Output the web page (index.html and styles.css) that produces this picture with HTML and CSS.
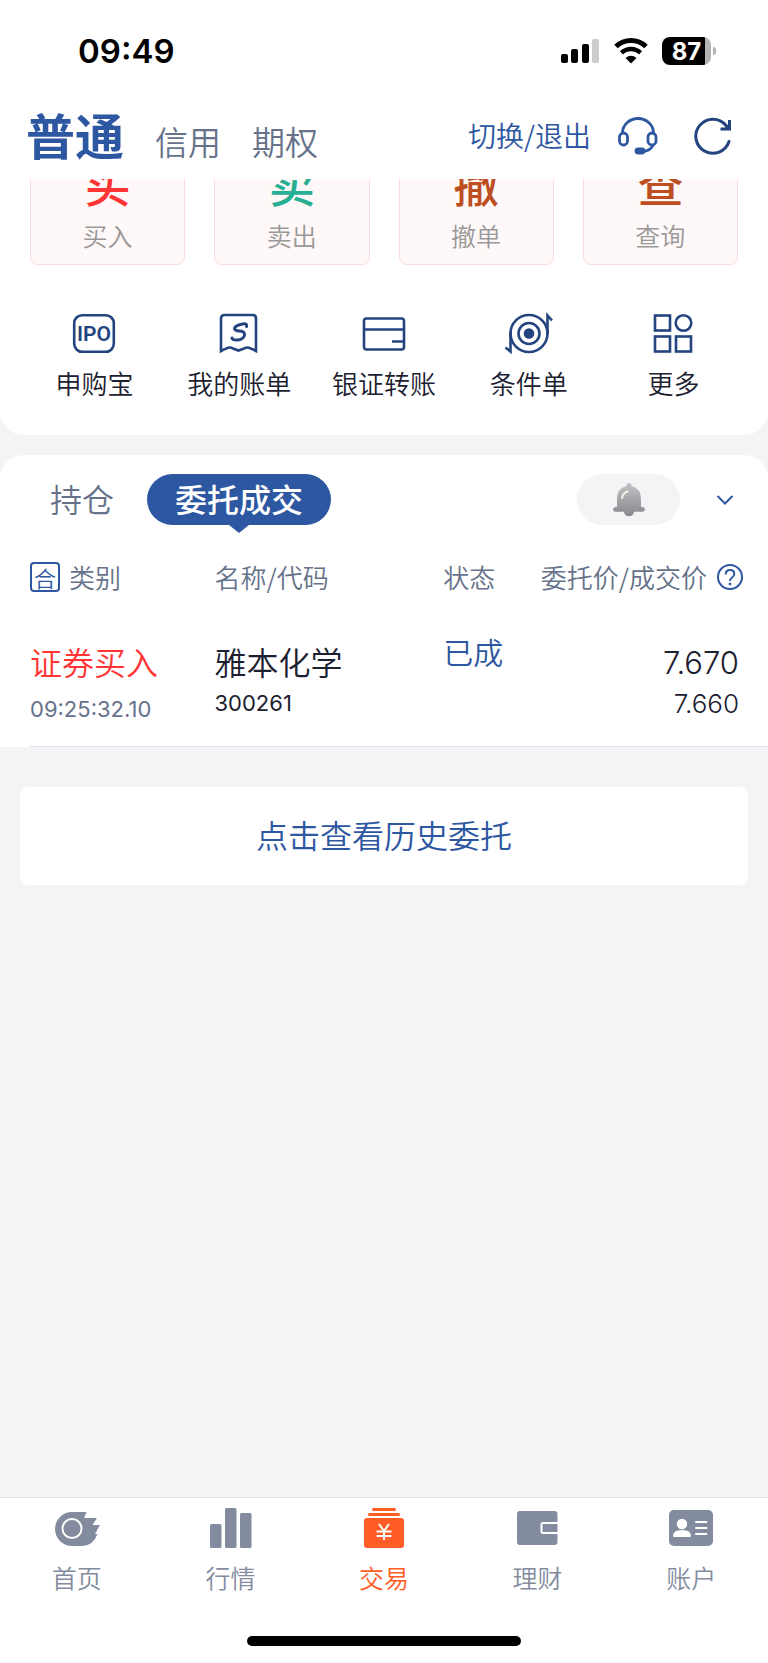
FILE: index.html
```html
<!DOCTYPE html>
<html lang="zh-CN">
<head>
    <meta charset="UTF-8">
    <meta name="viewport" content="width=device-width, initial-scale=1.0">
    <title>交易</title>
    <link rel="stylesheet" href="styles.css">
</head>
<body>

    <!-- 状态栏 -->
    <div class="status">
        <span class="clock">09:49</span>
        <div class="signals">
            <svg width="40" height="28" viewBox="0 0 40 28">
                <rect x="1" y="17" width="7" height="9" rx="2"/>
                <rect x="11" y="12" width="7" height="14" rx="2"/>
                <rect x="22" y="7" width="7" height="19" rx="2"/>
                <rect x="32" y="2" width="7" height="24" rx="2" fill="#ccc"/>
            </svg>
            <svg width="34" height="28" viewBox="0 0 34 28">
                <path d="M2 9.500a21.500 21.500 0 0 1 30 0" fill="none" stroke="#000" stroke-width="5"/>
                <path d="M7.500 15.800a13.500 13.500 0 0 1 19 0" fill="none" stroke="#000" stroke-width="4.500"/>
                <path d="M11.500 21q5.500-4.500 11 0L17 26.500z"/>
            </svg>
            <span class="battery"><span class="level">87</span></span>
        </div>
    </div>

    <header class="top">
        <nav class="accounts">
            <a class="current" href="#normal">普通</a>
            <a href="#credit">信用</a>
            <a href="#option">期权</a>
        </nav>
        <div class="tools">
            <button class="switch">切换/退出</button>
            <button aria-label="客服">
                <svg width="40" height="40" viewBox="0 0 40 40" fill="none" stroke="#2e57a2" stroke-width="2.800">
                    <path d="M4.500 18v-1a15.500 14.500 0 0 1 31 0v1"/>
                    <rect x="1.500" y="17" width="8" height="12" rx="4"/>
                    <rect x="30" y="17" width="8" height="12" rx="4"/>
                    <path d="M35 29q-2 5.500-10 6.500"/>
                    <rect x="18" y="33" width="8" height="4" rx="2" fill="#2e57a2"/>
                </svg>
            </button>
            <button aria-label="刷新">
                <svg width="40" height="40" viewBox="0 0 40 40" fill="none" stroke="#23447f" stroke-width="3" stroke-linecap="round">
                    <path d="M35 25.500A17 17 0 1 1 32 9.500"/>
                    <path d="M26.500 13h9V4" stroke-linecap="butt"/>
                    <path d="M30 12.500l5-5v5z" fill="#23447f" stroke="none"/>
                </svg>
            </button>
        </div>
    </header>

    <main>
        <section class="panel first">
            <!-- 滚动后上半部分被顶栏遮住 -->
            <div class="trade">
                <a class="buy" href="#buy"><b>买</b>买入</a>
                <a class="sell" href="#sell"><b>卖</b>卖出</a>
                <a href="#cancel"><b>撤</b>撤单</a>
                <a href="#query"><b>查</b>查询</a>
            </div>
            <nav class="quick">
                <a href="#ipo">
                    <svg width="48" height="42" viewBox="0 0 48 42">
                        <rect x="4.200" y="3.200" width="39.600" height="36.600" rx="8"/>
                        <text x="24" y="29" class="ipo">IPO</text>
                    </svg>
                    申购宝
                </a>
                <a href="#bill">
                    <svg width="48" height="42" viewBox="0 0 48 42">
                        <path d="M6 39V6.500q0-3.500 3.500-3.500h28q3.500 0 3.500 3.500V39q-3.500-2-5.500-2.500-3-2-6.500 0L23.500 38.500l-5.500-2q-3.500-2-6.500 0-2 .5-5.500 2.500z"/>
                        <path d="M31.500 14.500q1-3.500-4-2.500-7.500 1.500-8 4.500-.3 2 5 2.500 6 .5 5 4.500-1.500 4-7 4.500-5 .3-5.500-2" stroke-width="3" stroke-linecap="round"/>
                    </svg>
                    我的账单
                </a>
                <a href="#transfer">
                    <svg width="48" height="42" viewBox="0 0 48 42">
                        <rect x="4" y="6.500" width="40" height="31" rx="2.500"/>
                        <path d="M4 17.500h40M32 29.500h12"/>
                    </svg>
                    银证转账
                </a>
                <a href="#condition">
                    <svg width="48" height="42" viewBox="0 0 48 42">
                        <circle cx="24" cy="21.500" r="18.500"/>
                        <circle cx="24" cy="21.500" r="10.500"/>
                        <circle cx="24" cy="21.500" r="4" fill="#23447f"/>
                        <path d="M42.500 22V3.500l4.500 5M5.500 20v19.500l-5-4"/>
                    </svg>
                    条件单
                </a>
                <a href="#more">
                    <svg width="48" height="42" viewBox="0 0 48 42">
                        <rect x="5" y="3.500" width="15" height="15"/>
                        <circle cx="33.500" cy="11" r="7.800"/>
                        <rect x="5" y="24.500" width="15" height="15"/>
                        <rect x="26" y="24.500" width="15" height="15"/>
                    </svg>
                    更多
                </a>
            </nav>
        </section>

        <section class="panel second">
            <div class="tabs">
                <button class="tab">持仓</button>
                <button class="tab active">委托成交</button>
                <button class="bell" aria-label="提醒">
                    <svg width="32" height="36" viewBox="0 0 32 36">
                        <defs>
                            <linearGradient id="metal" x1="0" y1="0" x2="0" y2="1">
                                <stop offset="0" stop-color="#c0c2c5"/>
                                <stop offset="1" stop-color="#88898c"/>
                            </linearGradient>
                        </defs>
                        <path fill="url(#metal)" d="M16 1a2.500 2.500 0 0 1 2.500 3Q28 6.500 28 17v8h1.500a2.300 2.300 0 0 1 0 4.800H21a5 4.500 0 0 1-10 0H2.500a2.300 2.300 0 0 1 0-4.800H4v-8Q4 6.500 13.500 4A2.500 2.500 0 0 1 16 1z"/>
                        <path d="M9 16q1-5 5.500-6.500" fill="none" stroke="#f6f1e4" stroke-width="2" stroke-linecap="round"/>
                    </svg>
                </button>
                <button class="fold" aria-label="展开">
                    <svg width="18" height="12" viewBox="0 0 18 12" fill="none" stroke="#2e57a2" stroke-width="2">
                        <path d="M1.500 2L9 9.500 16.500 2"/>
                    </svg>
                </button>
            </div>

            <table>
                <colgroup>
                    <col class="c-type"><col class="c-name"><col class="c-state"><col class="c-price">
                </colgroup>
                <thead>
                    <tr>
                        <th><div class="head"><button class="merge">合</button>类别</div></th>
                        <th>名称/代码</th>
                        <th>状态</th>
                        <th>
                            <div class="head end">委托价/成交价
                                <button aria-label="说明">
                                    <svg width="28" height="28" viewBox="0 0 28 28" fill="none" stroke="#2e57a2" stroke-width="2">
                                        <circle cx="14" cy="14" r="12"/>
                                        <path d="M9.700 11.500q0-4.500 4.300-4.500t4.300 4q0 2-2.300 3.500-2 1.300-2 3.500"/>
                                        <circle cx="14" cy="21" r="1" fill="#2e57a2" stroke-width="1"/>
                                    </svg>
                                </button>
                            </div>
                        </th>
                    </tr>
                </thead>
                <tbody>
                    <tr>
                        <td><div class="big red">证券买入</div><div class="time">09:25:32.10</div></td>
                        <td><div class="big">雅本化学</div><div class="code">300261</div></td>
                        <td class="state">已成</td>
                        <td class="price"><div class="order">7.670</div><div class="deal">7.660</div></td>
                    </tr>
                </tbody>
            </table>
        </section>

        <a class="history" href="#history">点击查看历史委托</a>
    </main>

    <footer>
        <nav class="menu">
            <a href="#home">
                <svg width="48" height="44" viewBox="0 0 48 44">
                    <path d="M19 6h14.500L31 12h13l-4.500 7H47l-5 9h2.500Q40 40 29 40H19A17 17 0 0 1 19 6z"/>
                    <circle cx="19" cy="22.500" r="9.500" fill="none" stroke="#fff" stroke-width="2"/>
                </svg>
                首页
            </a>
            <a href="#quotes">
                <svg width="48" height="44" viewBox="0 0 48 44">
                    <rect x="4" y="18" width="11.500" height="24" rx="1.500"/>
                    <rect x="19" y="2" width="11.500" height="40" rx="1.500"/>
                    <rect x="34" y="7" width="11.500" height="35" rx="1.500"/>
                </svg>
                行情
            </a>
            <a class="on" href="#trade">
                <svg width="48" height="44" viewBox="0 0 48 44">
                    <rect x="12" y="2" width="24" height="3" rx="1.500"/>
                    <rect x="8" y="7" width="32" height="3" rx="1.500"/>
                    <rect x="4" y="12" width="40" height="30" rx="3"/>
                    <path d="M19 18l5 7 5-7M16.500 25.500h15M16.500 30h15M24 25v9" fill="none" stroke="#fff" stroke-width="2"/>
                </svg>
                交易
            </a>
            <a href="#wealth">
                <svg width="48" height="44" viewBox="0 0 48 44">
                    <rect x="3" y="5" width="40.500" height="34" rx="3"/>
                    <path d="M44 17H29q-1.500 0-1.500 1.500v7q0 1.500 1.500 1.500h15" fill="none" stroke="#fff" stroke-width="2"/>
                </svg>
                理财
            </a>
            <a href="#account">
                <svg width="48" height="44" viewBox="0 0 48 44">
                    <rect x="2" y="4" width="44" height="36" rx="5"/>
                    <g fill="#fff">
                        <circle cx="15" cy="18" r="5.200"/>
                        <path d="M6 30q0-6 9-6t9 6q0 1-1 1h-16q-1 0-1-1z"/>
                        <rect x="28" y="15" width="12.500" height="2" rx="1"/>
                        <rect x="28" y="21" width="12.500" height="2" rx="1"/>
                        <rect x="28" y="27" width="12.500" height="2" rx="1"/>
                    </g>
                </svg>
                账户
            </a>
        </nav>
        <div class="indicator"></div>
    </footer>

</body>
</html>
```

FILE: styles.css
```css
*{
    margin: 0;
    padding: 0;
    box-sizing: border-box;
}

body{
    display: flex;
    flex-direction: column;
    min-height: 100vh;
    background-color: #f3f4f6;
    color: #1c2030;
    font-family: "Noto Sans CJK SC", sans-serif;
    font-size: 26px;
    font-weight: 350;
    line-height: 36px;
}

a{
    color: inherit;
    text-decoration: none;
}

button{
    border: 0;
    background: none;
    color: inherit;
    font: inherit;
}

svg{ display: block; }

/* 状态栏 */
.status{
    display: flex;
    justify-content: space-between;
    align-items: center;
    height: 102px;
    padding: 0 57px 0 78px;
    background-color: #fff;
    color: #000;
    font-family: Inter, sans-serif;
}
.clock{
    font-size: 33px;
    font-weight: 600;
}
.signals{
    display: flex;
    align-items: center;
    gap: 14px;
}
.battery{
    position: relative;
    width: 49px; height: 28px;
    border-radius: 8px;
    background: linear-gradient(90deg, #000 43px, #b4b4b4 43px);
    color: #fff;
    font-size: 24px;
    font-weight: 700;
    line-height: 29px;
    text-align: center;
}
/* 电池正极 */
.battery::after{
    content: "";
    position: absolute;
    right: -5px; top: 10px;
    width: 3px; height: 8px;
    border-radius: 0 4px 4px 0;
    background-color: #b4b4b4;
}

/* 顶栏 */
.top{
    display: flex;
    justify-content: space-between;
    height: 77px;
    padding: 0 34px 0 26px;
    background-color: #fff;
}
.accounts{
    display: flex;
    align-items: baseline;
    gap: 31px;
    color: #66728a;
    font-size: 33px;
    line-height: 63px;
}
.accounts .current{
    color: #2e57a2;
    font-size: 49px;
    font-weight: 700;
}
.tools{
    display: flex;
    align-items: center;
    gap: 36px;
    height: 68px;
    color: #2e57a2;
    font-size: 28px;
}
.switch{
    margin-right: -9px;
    padding-bottom: 2px;
}

.panel{ background-color: #fff; }
.first{
    padding-bottom: 34px;
    border-radius: 0 0 24px 24px;
}
.second{
    margin-top: 20px;
    padding-top: 19px;
    border-radius: 24px 24px 0 0;
}

/* 买卖撤查 */
.trade{
    display: flex;
    align-items: flex-end;
    gap: 29px;
    height: 86px;
    padding: 0 30px;
    overflow: hidden;
}
.trade a{
    flex: 1;
    padding: 20px 0 11px;
    border: 1px solid #fdd9d9;
    border-radius: 8px;
    background-color: #fff8f8;
    color: #999;
    font-size: 25px;
    text-align: center;
}
.trade b{
    display: block;
    margin-bottom: 11px;
    color: #bd4e22;
    font-size: 46px;
    font-weight: 500;
    line-height: 48px;
}
.trade .buy b{ color: #ff3535; }
.trade .sell b{ color: #27af93; }

.quick{
    display: flex;
    padding: 47px 22px 0;
}
.quick a{
    display: flex;
    flex: 1;
    flex-direction: column;
    align-items: center;
    gap: 11px;
}
.quick svg{
    overflow: visible;
    fill: none;
    stroke: #23447f;
    stroke-width: 2.6px;
}
.quick .ipo{
    fill: #23447f;
    stroke: none;
    font: 600 21px Roboto, sans-serif;
    text-anchor: middle;
}

/* 持仓 / 委托成交 */
.tabs{
    display: flex;
    align-items: center;
    padding: 0 34px 0 50px;
}
.tab{
    padding-bottom: 2px;
    color: #66728a;
    font-size: 32px;
    line-height: 49px;
}
.active{
    position: relative;
    margin-left: 33px;
    padding: 0 28px 2px;
    border-radius: 26px;
    background-color: #2e57a2;
    color: #fff;
    font-weight: 500;
}
.active::after{
    content: "";
    position: absolute;
    left: 50%; top: 100%;
    margin-left: -10px;
    border: 10px solid transparent;
    border-top: 8px solid #2e57a2;
    border-bottom: 0;
}
.bell{
    display: flex;
    justify-content: center;
    align-items: center;
    width: 103px; height: 51px;
    margin-left: auto;
    border-radius: 26px;
    background-color: #f3f4f6;
}
.fold{ margin-left: 36px; }

/* 委托列表 */
table{
    width: 100%;
    padding-left: 30px;
    border-spacing: 0;
    table-layout: fixed;
}
.c-type{ width: 25%; }
.c-name{ width: 31%; }
.c-state{ width: 12%; }
.c-price{ width: 32%; }

th{
    padding-top: 34px;
    color: #66728a;
    font-weight: 350;
    text-align: left;
    white-space: nowrap;
}
.head{
    display: flex;
    align-items: center;
    gap: 9px;
}
.end{
    justify-content: flex-end;
    padding-right: 24px;
}
.merge{
    width: 30px; height: 30px;
    border: 2px solid #2e57a2;
    border-radius: 4px;
    color: #2e57a2;
    font-size: 22px;
    line-height: 22px;
}

td{
    padding: 46px 0 15px;
    border-bottom: 1px solid #dfe2ea;
    vertical-align: top;
}
.big{
    font-size: 32px;
    line-height: 40px;
}
.red{ color: #ff3535; }
.time, .code{
    font-family: Inter, sans-serif;
    font-size: 22px;
    font-weight: 400;
    line-height: 44px;
}
.time{
    padding-top: 6px;
    color: #66728a;
}
td.state{
    padding-top: 36px;
    color: #2e57a2;
    font-size: 30px;
    line-height: 40px;
}
td.price{
    padding-right: 29px;
    font-family: Inter, sans-serif;
    font-weight: 350;
    text-align: right;
}
.order{
    font-size: 31px;
    line-height: 44px;
}
.deal{ line-height: 38px; }

.history{
    display: block;
    margin: 40px 20px;
    padding-bottom: 4px;
    border-radius: 8px;
    background-color: #fff;
    color: #2e57a2;
    font-size: 32px;
    line-height: 94px;
    text-align: center;
}

/* 底部菜单 */
footer{
    margin-top: auto;
    padding-bottom: 17px;
    border-top: 1px solid #e3e5e8;
    background-color: #fff;
}
.menu{
    display: flex;
    height: 138px;
    padding-top: 8px;
    color: #838c9f;
    fill: #838c9f;
    font-size: 25px;
}
.menu a{
    display: flex;
    flex: 1;
    flex-direction: column;
    align-items: center;
    gap: 9px;
}
.menu .on{
    color: #ff5c26;
    fill: #ff5c26;
}
.indicator{
    width: 274px; height: 10px;
    margin: 0 auto;
    border-radius: 5px;
    background-color: #000;
}
```
